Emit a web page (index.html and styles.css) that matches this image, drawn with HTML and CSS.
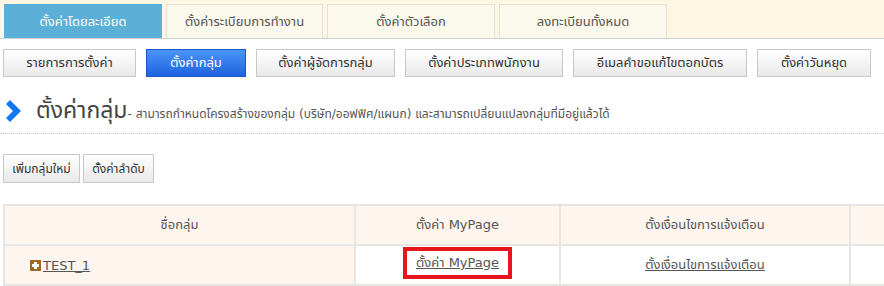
FILE: index.html
```html
<!DOCTYPE html>
<html lang="th">
<head>
<meta charset="utf-8">
<title>ตั้งค่ากลุ่ม</title>
<link rel="stylesheet" href="styles.css">
</head>
<body>
<div class="tabbar">
  <div class="tab tab-active w1">ตั้งค่าโดยละเอียด</div>
  <div class="tab w2">ตั้งค่าระเบียบการทำงาน</div>
  <div class="tab w3">ตั้งค่าตัวเลือก</div>
  <div class="tab w3">ลงทะเบียนทั้งหมด</div>
</div>
<div class="subnav">
  <button class="btn b1">รายการการตั้งค่า</button>
  <button class="btn btn-blue b2">ตั้งค่ากลุ่ม</button>
  <button class="btn b3">ตั้งค่าผู้จัดการกลุ่ม</button>
  <button class="btn b4">ตั้งค่าประเภทพนักงาน</button>
  <button class="btn b5">อีเมลคำขอแก้ไขตอกบัตร</button>
  <button class="btn b6">ตั้งค่าวันหยุด</button>
</div>
<div class="heading">
  <svg class="chev" width="15" height="22" viewBox="0 0 15 22"><path d="M0 4 L4 0 L15 11 L4 22 L0 18 L7 11 Z" fill="#1177ee"/></svg>
  <span class="title">ตั้งค่ากลุ่ม</span><span class="desc">- สามารถกำหนดโครงสร้างของกลุ่ม (บริษัท/ออฟฟิศ/แผนก) และสามารถเปลี่ยนแปลงกลุ่มที่มีอยู่แล้วได้</span>
</div>
<div class="actions">
  <button class="btn a1">เพิ่มกลุ่มใหม่</button>
  <button class="btn a2">ตั้งค่าลำดับ</button>
</div>
<table class="grid">
  <tr class="head">
    <th class="c1">ชื่อกลุ่ม</th>
    <th class="c2">ตั้งค่า MyPage</th>
    <th class="c3">ตั้งเงื่อนไขการแจ้งเตือน</th>
    <th class="c4"></th>
  </tr>
  <tr class="row">
    <td class="c1 name"><span class="plus"></span><a href="#">TEST_1</a></td>
    <td class="c2 hlcell"><div class="hlwrap"><span class="hl"><a href="#">ตั้งค่า MyPage</a></span></div></td>
    <td class="c3"><a href="#">ตั้งเงื่อนไขการแจ้งเตือน</a></td>
    <td class="c4"></td>
  </tr>
</table>
</body>
</html>
```
FILE: styles.css
```css
html, body {
  margin: 0;
  padding: 0;
  background: #fff;
  font-family: Tahoma, "DejaVu Sans", "Noto Sans Thai", "Noto Sans", sans-serif;
  font-size: 13px;
  color: #444;
  overflow: hidden;
}
.tabbar {
  display: flex;
  gap: 4px;
  padding: 4px 0 0 4px;
  height: 34px;
  background: #fdf6e3;
  border-bottom: 1px solid #cfcfcf;
}
.tab {
  box-sizing: border-box;
  height: 34px;
  border: 1px solid #e4e0d2;
  border-bottom: none;
  background: #fbf8ec;
  color: #555;
  display: flex;
  align-items: center;
  justify-content: center;
  font-size: 13px;
}
.tab-active {
  background: #5cafd7;
  border-color: #5cafd7;
  color: #fff;
}
.w1 { width: 158px; }
.w2 { width: 157px; }
.w3 { width: 168px; }
.subnav {
  display: flex;
  gap: 10px;
  padding: 10px 0 0 3px;
}
.btn {
  box-sizing: border-box;
  height: 28px;
  border: 1px solid #c9c9c9;
  background: linear-gradient(#ffffff, #e9e9e9);
  color: #333;
  font-family: inherit;
  font-size: 13px;
  padding: 0;
  border-radius: 0;
}
.btn-blue {
  background: linear-gradient(#4b95f7, #1d63e0);
  border-color: #1c57c6;
  color: #fff;
}
.b1 { width: 133px; }
.b2 { width: 100px; }
.b3 { width: 139px; }
.b4 { width: 158px; }
.b5 { width: 174px; }
.b6 { width: 114px; }
.heading {
  display: flex;
  align-items: center;
  margin: 18px 0 0 0;
  padding: 0 0 6px 6px;
  height: 32px;
  border-bottom: 1px dotted #c8c8c8;
}
.chev { margin-right: 15px; }
.title {
  font-size: 23px;
  color: #444;
}
.desc {
  font-size: 12px;
  color: #555;
  margin-top: 6px;
}
.actions {
  display: flex;
  gap: 3px;
  padding: 20px 0 0 3px;
}
.actions .btn { height: 29px; font-size: 12px; }
.a1 { width: 77px; }
.a2 { width: 71px; }
.grid {
  margin: 21px 0 0 3px;
  border-collapse: collapse;
  table-layout: fixed;
  width: 920px;
}
.grid th, .grid td {
  border: 2px solid #e8e6e4;
  text-align: center;
  font-weight: normal;
  height: 38px;
  padding: 0;
  color: #555;
}
.head th { background: #fdf5ee; }
.c1 { width: 349px; }
.c2 { width: 203px; }
.c3 { width: 288px; }
.row td { background: #fff; }
.row td.c1 { background: #fdf5ee; }
.name { text-align: left !important; padding-left: 25px !important; }
.plus {
  display: inline-block;
  width: 11px;
  height: 11px;
  background: #9b6a28;
  position: relative;
  vertical-align: -1px;
  margin-right: 2px;
}
.plus::before, .plus::after {
  content: "";
  position: absolute;
  background: #fff;
}
.plus::before { left: 2px; top: 4px; width: 7px; height: 3px; }
.plus::after { left: 4px; top: 2px; width: 3px; height: 7px; }
.grid a { color: #555; text-decoration: underline; }
.grid td.hlcell { padding-bottom: 4px; height: 34px; }
.hlwrap {
  display: flex;
  justify-content: center;
}
.hl {
  display: block;
  border: 4px solid #e8151f;
  padding: 4px 9px;
  line-height: 16px;
}
```
